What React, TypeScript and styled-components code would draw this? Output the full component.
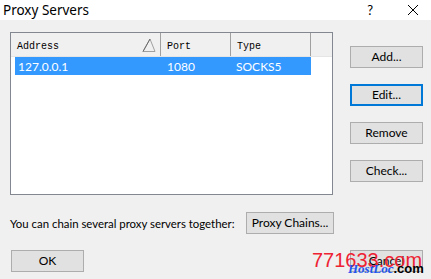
import styled, { createGlobalStyle } from "styled-components";

const Global = createGlobalStyle`
  html, body { margin: 0; padding: 0; background: #f0f0f0; }
  body { font-family: Lato, "Noto Sans", sans-serif; }
`;

const columns = [
  { name: "Address", width: 150, sort: true },
  { name: "Port", width: 70 },
  { name: "Type", width: 80 },
];

const rows = [{ address: "127.0.0.1", port: "1080", type: "SOCKS5" }];

export default function App() {
  return (
    <Window>
      <Global />
      <TitleBar>
        <Title>Proxy Servers</Title>
        <TitleButtons>
          <TitleGlyph>?</TitleGlyph>
          <TitleGlyph>
            <svg width="12" height="12" viewBox="0 0 12 12">
              <path d="M1 1L11 11M11 1L1 11" stroke="#000" strokeWidth="1" />
            </svg>
          </TitleGlyph>
        </TitleButtons>
      </TitleBar>
      <Body>
        <MainRow>
          <ListBox>
            <Header>
              {columns.map((c) => (
                <HeadCell key={c.name} $w={c.width}>
                  {c.name}
                  {c.sort && (
                    <SortMark width="14" height="14" viewBox="0 0 14 14">
                      <path d="M1 13.5L8 1L13 13.5Z" fill="none" stroke="#a0a0a0" strokeWidth="1" />
                      <path d="M1 13.5L8 1" stroke="#6a6a6a" strokeWidth="1" />
                    </SortMark>
                  )}
                </HeadCell>
              ))}
              <HeadFiller />
            </Header>
            {rows.map((r) => (
              <Row key={r.address} $selected>
                <Cell $w={146} $pad={3}>{r.address}</Cell>
                <Cell $w={70} $pad={6}>{r.port}</Cell>
                <Cell $w={80} $pad={5}>{r.type}</Cell>
              </Row>
            ))}
          </ListBox>
          <SideButtons>
            <Button>Add...</Button>
            <Button $focused>Edit...</Button>
            <Button>Remove</Button>
            <Button>Check...</Button>
          </SideButtons>
        </MainRow>
        <ChainRow>
          <Label>You can chain several proxy servers together:</Label>
          <Button $w={88}>Proxy Chains...</Button>
        </ChainRow>
        <BottomRow>
          <Button $w={73}>OK</Button>
          <CancelWrap>
            <Button>Cancel</Button>
            <Watermark>771633.com</Watermark>
            <Watermark2>
              <em>HostLoc</em>
              <b>.com</b>
            </Watermark2>
          </CancelWrap>
        </BottomRow>
      </Body>
    </Window>
  );
}

const Window = styled.div`
  width: 431px;
  height: 279px;
  background: #f0f0f0;
  display: flex;
  flex-direction: column;
  overflow: hidden;
`;

const TitleBar = styled.div`
  height: 20px;
  background: #fff;
  display: flex;
  align-items: center;
  justify-content: space-between;
  padding-left: 3px;
`;

const Title = styled.div`
  font-family: "Noto Sans", sans-serif;
  font-size: 13.5px;
  color: #000;
  margin-top: -1px;
`;

const TitleButtons = styled.div`
  display: flex;
  align-items: center;
  gap: 34px;
  padding-right: 12px;
`;

const TitleGlyph = styled.div`
  font-size: 13px;
  display: flex;
  align-items: center;
  color: #000;
`;

const Body = styled.div`
  padding: 12px 8px 0 10px;
  display: flex;
  flex-direction: column;
`;

const MainRow = styled.div`
  display: flex;
  gap: 17px;
`;

const ListBox = styled.div`
  width: 322px;
  height: 161px;
  border: 1px solid #828790;
  background: #fff;
  box-sizing: content-box;
`;

const Header = styled.div`
  display: flex;
  height: 23px;
  background: #f0f0f0;
  border-bottom: 1px solid #e5e5e5;
`;

const HeadCell = styled.div<{ $w: number }>`
  position: relative;
  width: ${(p) => p.$w}px;
  box-sizing: border-box;
  border-right: 1px solid #a0a0a0;
  padding: 3px 0 0 6px;
  display: flex;
  align-items: center;
  font-family: "Liberation Mono", monospace;
  font-size: 10px;
  color: #000;
`;

const HeadFiller = styled.div`
  flex: 1;
`;

const SortMark = styled.svg`
  position: absolute;
  right: 4px;
  top: 5px;
`;

const Row = styled.div<{ $selected?: boolean }>`
  display: flex;
  height: 18px;
  margin-left: 4px;
  width: 296px;
  background: ${(p) => (p.$selected ? "#3399ff" : "transparent")};
  color: ${(p) => (p.$selected ? "#fff" : "#000")};
  font-family: Lato, sans-serif;
  font-size: 12px;
  align-items: center;
`;

const Cell = styled.div<{ $w: number; $pad: number }>`
  width: ${(p) => p.$w}px;
  padding-left: ${(p) => p.$pad}px;
  box-sizing: border-box;
`;

const SideButtons = styled.div`
  display: flex;
  flex-direction: column;
  gap: 16px;
  padding-top: 14px;
`;

const Button = styled.button<{ $w?: number; $focused?: boolean }>`
  width: ${(p) => p.$w ?? 73}px;
  height: 22px;
  box-sizing: border-box;
  background: #e1e1e1;
  border: ${(p) => (p.$focused ? "2px solid #0078d7" : "1px solid #adadad")};
  font-family: Lato, sans-serif;
  font-size: 12px;
  color: #000;
  padding: 0;
  line-height: 1;
`;

const ChainRow = styled.div`
  display: flex;
  align-items: center;
  margin-top: 17px;
`;

const Label = styled.div`
  font-family: Lato, sans-serif;
  font-size: 11.4px;
  color: #000;
  width: 236px;
  white-space: nowrap;
  flex: none;
`;

const BottomRow = styled.div`
  display: flex;
  justify-content: space-between;
  align-items: center;
  margin-top: 15px;
  padding-left: 1px;
`;

const CancelWrap = styled.div`
  position: relative;
`;

const Watermark = styled.div`
  position: absolute;
  left: -38px;
  top: 1px;
  font-family: "Liberation Sans", sans-serif;
  font-size: 20px;
  line-height: 1;
  color: #ee2233;
  white-space: nowrap;
  pointer-events: none;
`;

const Watermark2 = styled.div`
  position: absolute;
  left: -2px;
  top: 13px;
  white-space: nowrap;
  font-size: 13px;
  line-height: 1;
  pointer-events: none;
  em {
    font-family: "Liberation Serif", serif;
    font-style: italic;
    font-weight: bold;
    color: #2255ee;
  }
  b {
    font-family: "Liberation Sans", sans-serif;
    color: #000;
  }
`;
